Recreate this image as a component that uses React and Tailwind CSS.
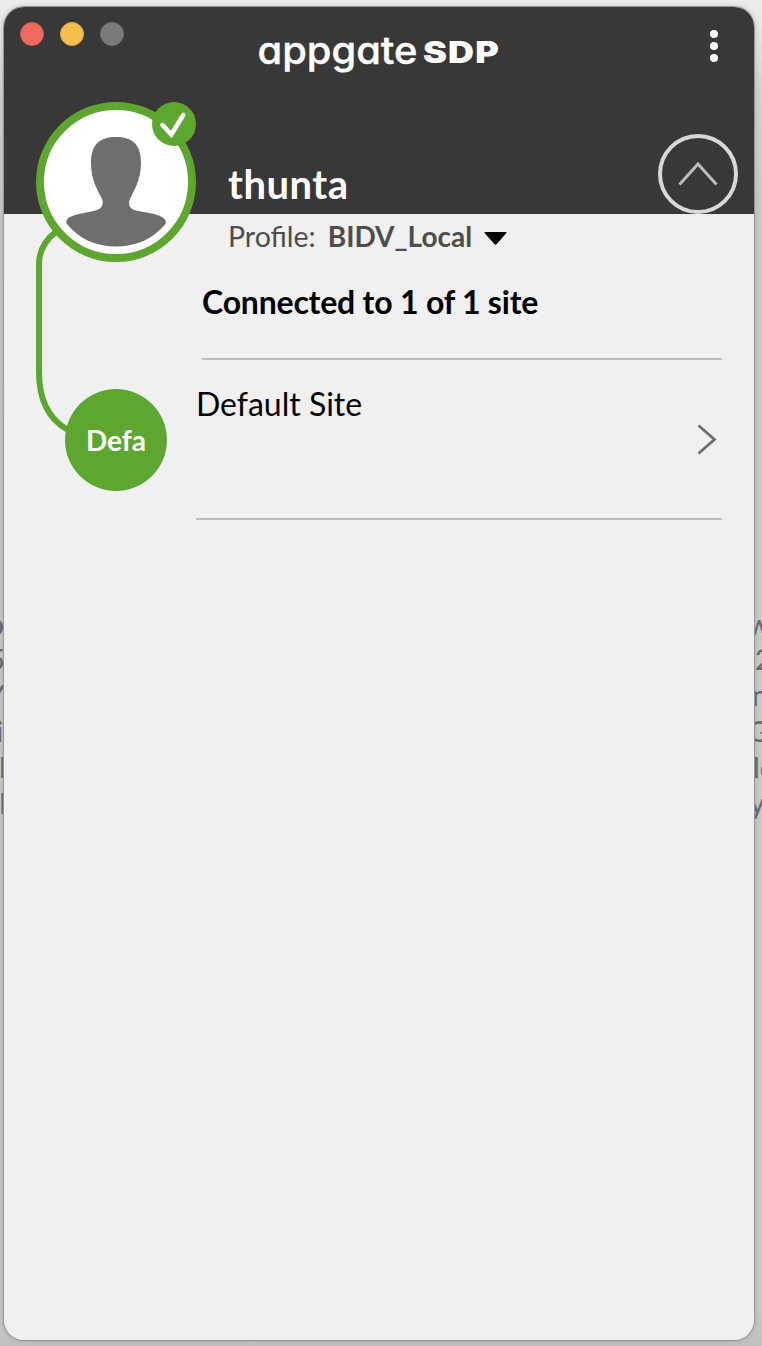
import React from "react";

const leftText = [
  ["p", "right-[758px]", "top-[606px]"],
  ["5", "right-[757px]", "top-[641px]"],
  ["Y", "right-[757px]", "top-[677px]"],
  ["i", "right-[759px]", "top-[713px]"],
  ["l", "right-[756px]", "top-[749px]"],
  ["k", "right-[748px]", "top-[785px]"],
];

const rightText = [
  ["w", "left-[748px]", "top-[606px]"],
  ["2", "left-[755px]", "top-[641px]"],
  ["n", "left-[752px]", "top-[677px]"],
  ["G", "left-[748px]", "top-[713px]"],
  ["lo", "left-[753px]", "top-[749px]"],
  ["y", "left-[750px]", "top-[785px]"],
];

function Backdrop() {
  return (
    <div className="absolute inset-0 overflow-hidden text-[28px] font-medium leading-9 text-[#6c6c6c]">
      {[...leftText, ...rightText].map(([t, x, y]) => (
        <span key={t + x} className={`absolute ${x} ${y}`}>{t}</span>
      ))}
    </div>
  );
}

function Logo() {
  return (
    <svg width="250" height="50" viewBox="254 28 250 50" className="block" fill="#fff">
      <text
        x="257.5"
        y="63.5"
        fontSize="38.5"
        fontWeight="500"
        stroke="#fff"
        strokeWidth="0.4"
        textLength="160"
        lengthAdjust="spacingAndGlyphs"
        className="font-['Inter',sans-serif] [font-feature-settings:'cv11']"
      >
        appgate
      </text>
      <text
        x="423"
        y="63"
        fontSize="29.5"
        fontWeight="900"
        textLength="77"
        lengthAdjust="spacingAndGlyphs"
        className="font-['Inter',sans-serif] tracking-[1px]"
      >
        SDP
      </text>
    </svg>
  );
}

function Avatar() {
  return (
    <svg width="162" height="162" viewBox="35 101 162 162" className="absolute left-[31px] top-[94px]">
      <circle cx="116" cy="182" r="76" fill="#fff" stroke="#5da630" strokeWidth="8" />
      <path
        fill="#6e6e6e"
        d="M116 137C132 137 141 144 141 163C141 180 134 190 130 199C127.500 205 130 209 136 210.500C146 213 155 213 162 217C165 219 166.500 221 165.500 224C153 239 136 246.500 116 246.500C96 246.500 79 239 67 224C65.500 221 67 218.500 70 217C78 213 88 213 97 210C102 208 104 204 102 199C98 191 91 180 91 163C91 144 100 137 116 137Z"
      />
      <circle cx="174" cy="124" r="22" fill="#5da630" />
      <path d="M162.500 125L171.300 134.500L183.300 115" fill="none" stroke="#fff" strokeWidth="4.500" strokeLinecap="round" />
    </svg>
  );
}

export default function App() {
  return (
    <main className="relative flex h-[1346px] w-[762px] flex-col overflow-hidden bg-[linear-gradient(to_bottom,#ededed_0px,#e5e5e5_30px,#d2d2d2_90px,#c9c9c9_200px,#c8c8c8_1310px,#c0c0c0_1346px)] pl-1 pt-[7px] font-['Lato',sans-serif]">
      <Backdrop />
      <section className="relative h-[1333px] w-[750px] rounded-[20px] shadow-[0_0_0_1px_#969696,0_0_5px_1px_rgba(0,0,0,0.15)]">
        <div className="flex h-full flex-col overflow-hidden rounded-[20px] bg-[#f0f0f0]">
          <header className="flex h-[207px] shrink-0 flex-col justify-between bg-[#383838] pl-4 pr-4">
            <div className="flex h-[70px] items-start">
              <div className="flex gap-4 pt-[15px]">
                <span className="size-6 rounded-full border border-[#d65d53] bg-[#ed6b60]" />
                <span className="size-6 rounded-full border border-[#dba644] bg-[#f5bf4f]" />
                <span className="size-6 rounded-full border border-[#747474] bg-[#7b7b7b]" />
              </div>
              <div className="ml-[130px] pt-[21px]"><Logo /></div>
              <div className="ml-auto mr-5 flex flex-col gap-1 pt-[23px]">
                <span className="size-2 rounded-full bg-white" />
                <span className="size-2 rounded-full bg-white" />
                <span className="size-2 rounded-full bg-white" />
              </div>
            </div>
            <div className="flex items-end justify-between pl-52">
              <h1 className="pb-1.5 text-[40px] font-bold leading-[48px] tracking-[0.5px] text-white">thunta</h1>
              <svg width="80" height="80" viewBox="0 0 80 80" fill="none">
                <circle cx="40" cy="40" r="38" stroke="#d8d8d8" strokeWidth="4" />
                <path d="M21.500 50.500L40 30L58.500 50.500" stroke="#bdbdbd" strokeWidth="3" />
              </svg>
            </div>
          </header>

          <div className="flex h-[44px] shrink-0 items-center pl-56 text-[28px] leading-9 text-[#4d4d4d]">
            <span className="-mt-px text-[28.5px]">Profile:</span>
            <strong className="-mt-px ml-3 font-bold">BIDV_Local</strong>
            <svg width="23" height="13" viewBox="0 0 23 13" className="ml-3 mt-1" fill="#000">
              <path d="M1 0H22Q23 .5 22 1.500L12.500 12.300Q11.500 13.200 10.500 12.300L1 1.500Q0 .5 1 0Z" />
            </svg>
          </div>

          <div className="ml-[198px] mr-8 flex h-[102px] shrink-0 items-start border-b-2 border-[#bdbdbd] pt-6 text-[32px] font-bold leading-[40px] tracking-[-0.2px] text-black">
            Connected to 1 of 1 site
          </div>

          <div className="ml-[61px] mr-8 flex h-[160px] shrink-0">
            <div className="mt-[29px] flex size-[102px] items-center justify-center rounded-full bg-[#5da630] text-[28px] font-bold text-white">
              Defa
            </div>
            <div className="ml-[29px] flex grow items-start justify-between border-b-2 border-[#bdbdbd] pt-6 text-[32px] leading-[40px] text-black">
              <span>Default Site</span>
              <svg width="22" height="32" viewBox="0 0 22 32" fill="none" className="mr-1 mt-[39px]">
                <path d="M2.500 2.500L18.500 16.500L2.500 30.500" stroke="#6e6e6e" strokeWidth="2.800" />
              </svg>
            </div>
          </div>
        </div>

        <svg width="60" height="220" viewBox="30 220 60 220" fill="none" className="absolute left-[26px] top-[213px]">
          <path d="M57 231C45 240 39 252 39 264V372C39 402 50 420 68 430" stroke="#5da630" strokeWidth="6" />
        </svg>
        <Avatar />
      </section>
    </main>
  );
}
